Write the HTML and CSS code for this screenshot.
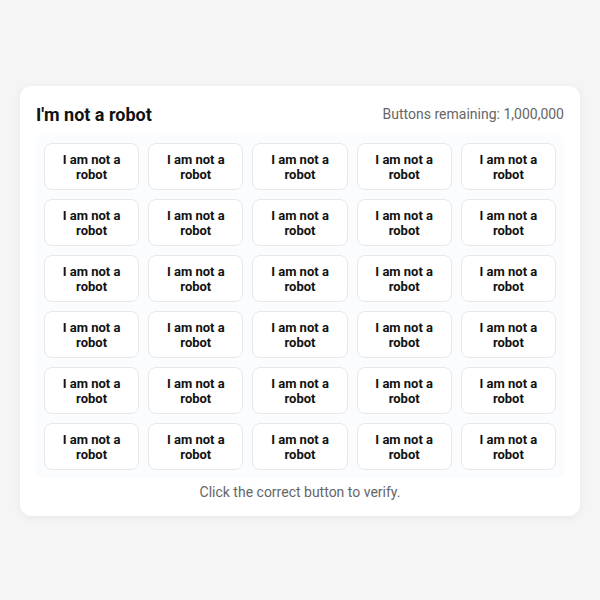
FILE: index.html
```html
<!DOCTYPE html>
<html lang="en">
<head>
<meta charset="utf-8">
<title>I'm not a robot</title>
<link rel="stylesheet" href="styles.css">
</head>
<body>
<main class="page">
  <section class="card">
    <header class="card-head">
      <h1 class="title">I'm not a robot</h1>
      <span class="remaining">Buttons remaining: 1,000,000</span>
    </header>
    <div class="grid" id="grid"></div>
    <p class="hint">Click the correct button to verify.</p>
  </section>
</main>
<script src="app.js"></script>
</body>
</html>
```
FILE: styles.css
```css
* { box-sizing: border-box; }

html, body {
  margin: 0;
  padding: 0;
  background: #f5f5f5;
  font-family: Roboto, "Liberation Sans", Arial, sans-serif;
}

.page {
  width: 600px;
  height: 600px;
  padding: 86px 20px 0;
}

.card {
  background: #ffffff;
  border-radius: 12px;
  box-shadow: 0 2px 10px rgba(0, 0, 0, 0.06);
  padding: 16px 16px 14px;
}

.card-head {
  display: flex;
  align-items: center;
  justify-content: space-between;
  height: 24px;
  margin-bottom: 9px;
}

.title {
  margin: 0;
  font-size: 18px;
  font-weight: 700;
  color: #111111;
}

.remaining {
  font-size: 14px;
  color: #666666;
}

.grid {
  display: grid;
  grid-template-columns: repeat(5, 1fr);
  gap: 9px;
  padding: 8px;
  background: #fafcfe;
  border-radius: 6px;
}

.robot-btn {
  height: 47px;
  border: 1px solid #e6e8eb;
  border-radius: 8px;
  background: #ffffff;
  font-family: Roboto, "Liberation Sans", Arial, sans-serif;
  font-size: 13px;
  font-weight: 700;
  line-height: 15px;
  color: #111111;
  padding: 0 6px;
  cursor: pointer;
}

.hint {
  margin: 4px 0 0;
  text-align: center;
  font-size: 14px;
  line-height: 20px;
  color: #666666;
}
```
FILE: app.js
```js
// Fill the grid with 30 identical verification buttons.
const grid = document.getElementById('grid');
for (let i = 0; i < 30; i++) {
  const btn = document.createElement('button');
  btn.className = 'robot-btn';
  btn.textContent = 'I am not a robot';
  grid.appendChild(btn);
}
```
